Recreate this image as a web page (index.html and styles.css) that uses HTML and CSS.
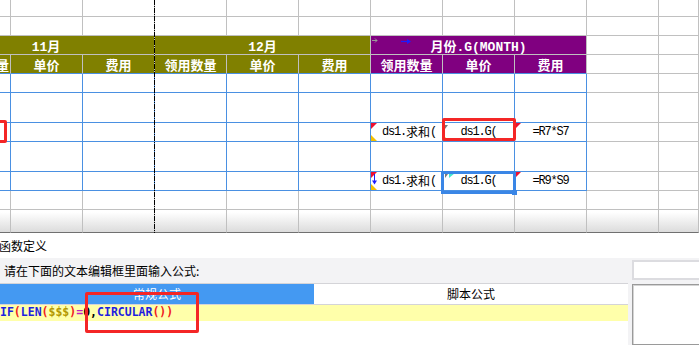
FILE: index.html
```html
<!DOCTYPE html>
<html lang="zh-CN">
<head>
    <meta charset="UTF-8">
    <title>报表设计 - 函数定义</title>
    <link rel="stylesheet" href="styles.css">
</head>
<body>

    <!-- spreadsheet area -->
    <div class="sheet">
        <div class="grid">
            <!-- row: empty -->
            <div class="c"></div><div class="c"></div><div class="c"></div><div class="c"></div><div class="c"></div><div class="c"></div><div class="c"></div><div class="c"></div><div class="c"></div><div class="c"></div><div class="c"></div>
            <!-- row: empty -->
            <div class="c"></div><div class="c"></div><div class="c"></div><div class="c"></div><div class="c"></div><div class="c"></div><div class="c"></div><div class="c"></div><div class="c"></div><div class="c"></div><div class="c"></div>

            <!-- header row 1 -->
            <div class="c olive hd span3 first-hd">11月</div>
            <div class="c olive hd span3">12月</div>
            <div class="c purple hd span3">
                <svg class="hd-arrows" width="44" height="8" viewBox="0 0 44 8">
                    <path d="M1 3.5H6M4 1.5L6 3.5L4 5.5" stroke="#9a9a9a" stroke-width="1" fill="none"/>
                    <path d="M30 4.5H39" stroke="#1c1cff" stroke-width="1.2"/>
                    <path d="M36 2L40 4.5L36 7Z" fill="#1c1cff"/>
                </svg>
                月份.G(MONTH)
            </div>
            <div class="c"></div><div class="c"></div>

            <!-- header row 2 -->
            <div class="c olive hd hb clip-right">领用数量</div>
            <div class="c olive hd hb">单价</div>
            <div class="c olive hd hb">费用</div>
            <div class="c olive hd hb">领用数量</div>
            <div class="c olive hd hb">单价</div>
            <div class="c olive hd hb">费用</div>
            <div class="c purple hd hb">领用数量</div>
            <div class="c purple hd hb">单价</div>
            <div class="c purple hd hb">费用</div>
            <div class="c"></div><div class="c"></div>

            <!-- data rows -->
            <div class="c b"></div><div class="c b"></div><div class="c b"></div><div class="c b"></div><div class="c b"></div><div class="c b"></div><div class="c b"></div><div class="c b"></div><div class="c b"></div><div class="c"></div><div class="c"></div>
            <div class="c b"></div><div class="c b"></div><div class="c b"></div><div class="c b"></div><div class="c b"></div><div class="c b"></div><div class="c b"></div><div class="c b"></div><div class="c b"></div><div class="c"></div><div class="c"></div>

            <div class="c b"></div><div class="c b"></div><div class="c b"></div><div class="c b"></div><div class="c b"></div><div class="c b"></div>
            <div class="c b txt txt-left"><i class="tri tri-red"></i><i class="tri tri-yellow"></i>ds1.<span class="cjk">求和</span>(</div>
            <div class="c b txt"><i class="tri tri-gray"></i><i class="tri tri-yellow"></i>ds1.G(</div>
            <div class="c b txt"><i class="tri tri-red"></i>=R7*S7</div>
            <div class="c"></div><div class="c"></div>

            <div class="c b"></div><div class="c b"></div><div class="c b"></div><div class="c b"></div><div class="c b"></div><div class="c b"></div><div class="c b"></div><div class="c b"></div><div class="c b"></div><div class="c"></div><div class="c"></div>

            <div class="c b"></div><div class="c b"></div><div class="c b"></div><div class="c b"></div><div class="c b"></div><div class="c b"></div>
            <div class="c b txt txt-left">
                <i class="tri tri-red"></i><i class="tri tri-yellow"></i>
                <svg class="down-arrow" width="5" height="11" viewBox="0 0 5 11">
                    <path d="M2.5 0V9" stroke="#1c1cff" stroke-width="1"/>
                    <path d="M0 6.5L2.5 10.5L5 6.5Z" fill="#1c1cff"/>
                </svg>
                ds1.<span class="cjk">求和</span>(
            </div>
            <div class="c b txt"><i class="tri tri-gray"></i><i class="tri tri-cyan"></i>ds1.G(</div>
            <div class="c b txt"><i class="tri tri-red"></i>=R9*S9</div>
            <div class="c"></div><div class="c"></div>

            <!-- rows below the data -->
            <div class="c"></div><div class="c"></div><div class="c"></div><div class="c"></div><div class="c"></div><div class="c"></div><div class="c"></div><div class="c"></div><div class="c"></div><div class="c"></div><div class="c"></div>
            <div class="c last"></div><div class="c last"></div><div class="c last"></div><div class="c last"></div><div class="c last"></div><div class="c last"></div><div class="c last"></div><div class="c last"></div><div class="c last"></div><div class="c last"></div><div class="c last"></div>
        </div>

        <!-- page break line -->
        <div class="page-break"></div>

        <!-- highlight boxes drawn over the sheet -->
        <div class="mark mark-left"></div>
        <div class="mark mark-cell"></div>
        <div class="select-box"><span class="handle"></span></div>
    </div>

    <!-- function definition panel -->
    <div class="panel">
        <div class="panel-title">函数定义</div>
        <div class="panel-body">
            <div class="prompt">请在下面的文本编辑框里面输入公式:</div>
            <div class="side-input"></div>
            <div class="editor">
                <div class="tabs">
                    <div class="tab active">常规公式</div>
                    <div class="tab">脚本公式</div>
                </div>
                <div class="formula"><span class="fn">IF</span><span class="par">(</span><span class="fn">LEN</span><span class="par">(</span><span class="var">$$$</span><span class="par">)</span><span class="op">=</span>0,<span class="fn">CIRCULAR</span><span class="par">())</span></div>
            </div>
            <div class="side-box"></div>
        </div>
        <div class="mark mark-formula"></div>
    </div>

</body>
</html>
```

FILE: styles.css
```css
/* page size matches the screenshot */
body {
    margin: 0;
    width: 699px;
    height: 345px;
    overflow: hidden;
    background-color: #fff;
    font-family: "Noto Sans CJK SC", "Liberation Sans", sans-serif;
    color: #000;
}

/* spreadsheet */
.sheet {
    position: relative;
    height: 233px;
    overflow: hidden;
}

.grid {
    display: grid;
    grid-template-columns: 11px repeat(9, 72px) 40px;
    grid-template-rows: 17px 19px 19px 19px 19px 30px 19px 30px 19px 19px 23px;
}

/* a single cell */
.c {
    box-sizing: border-box;
    position: relative;
    display: flex;
    align-items: center;
    justify-content: center;
    overflow: hidden;
    white-space: nowrap;
    border-right: 1px solid #c0c0c0;
    border-bottom: 1px solid #c0c0c0;
}

.c.b {
    border-color: #4a90e2; /* blue grid of the data block */
}

.c.hb {
    border-bottom-color: #4a90e2;
}

.olive {
    background-color: #808000;
}

.purple {
    background-color: #800080;
}

.hd {
    color: #fff;
    font: bold 13px "Liberation Mono", "Noto Sans CJK SC", monospace;
}

.span3 {
    grid-column: span 3;
}

/* merged header that starts left of the visible area */
.first-hd {
    padding-right: 62px;
}

.clip-right {
    justify-content: flex-end;
    padding-right: 1px;
}

.hd-arrows {
    position: absolute;
    left: 0;
    top: 1px;
}

.last {
    background: linear-gradient(#fff 10%, #dcdcdc);
    border-bottom-color: #707070;
}

/* cell text */
.txt {
    font: 12px "Liberation Mono", "Noto Sans CJK SC", monospace;
    letter-spacing: -1.2px;
}

.txt .cjk {
    letter-spacing: 0;
}

.txt-left {
    justify-content: flex-start;
    padding-left: 11px;
}

/* little cell markers */
.tri {
    position: absolute;
    width: 0;
    height: 0;
}

.tri-red {
    top: 0;
    left: 0;
    border-top: 6px solid #ee1030;
    border-right: 6px solid transparent;
}

.tri-yellow {
    bottom: 0;
    left: 0;
    border-bottom: 6px solid #f5c000;
    border-right: 6px solid transparent;
}

.tri-gray {
    top: 2px;
    left: 2px;
    border-top: 4px solid #7a7a7a;
    border-right: 3px solid transparent;
}

.tri-cyan {
    top: 1px;
    left: 6px;
    border-top: 5px solid #40e8d0;
    border-right: 6px solid transparent;
}

.down-arrow {
    position: absolute;
    left: 1px;
    top: 2px;
}

/* dash-dot page break */
.page-break {
    position: absolute;
    left: 154px;
    top: 0;
    width: 1px;
    height: 233px;
    background: repeating-linear-gradient(#000 0 5px, transparent 5px 6px, #000 6px 7px, transparent 7px 8px);
}

/* red annotation boxes */
.mark {
    position: absolute;
    box-sizing: border-box;
    border: 3px solid #f42626;
    border-radius: 2px;
}

.mark-left {
    left: -60px;
    top: 120px;
    width: 67px;
    height: 23px;
}

.mark-cell {
    left: 442px;
    top: 118px;
    width: 74px;
    height: 23px;
}

.mark-formula {
    left: 85px;
    top: 59px;
    width: 114px;
    height: 41px;
}

/* selected cell */
.select-box {
    position: absolute;
    box-sizing: border-box;
    left: 441px;
    top: 171px;
    width: 75px;
    height: 23px;
    border: 3px solid #3a86e6;
}

.handle {
    position: absolute;
    right: -4px;
    bottom: -4px;
    width: 5px;
    height: 5px;
    background-color: #3a86e6;
}

/* function panel */
.panel {
    position: relative;
    height: 112px;
}

.panel-title {
    height: 25px;
    line-height: 25px;
    font-size: 12px;
    margin-left: -1px;
}

.panel-body {
    display: grid;
    grid-template-columns: 628px 67px;
    grid-template-rows: 25px 62px;
    column-gap: 4px;
    background-color: #f3f3f5;
}

.prompt {
    font-size: 12px;
    line-height: 25px;
    padding-left: 4px;
}

.side-input {
    box-sizing: border-box;
    margin-top: 2px;
    height: 20px;
    width: 75px;
    background-color: #fff;
    border: 2px solid #dcdce0;
}

.editor {
    background-color: #fff;
    border-top: 1px solid #d4d4d8;
}

.tabs {
    display: flex;
    height: 20px;
    border-bottom: 1px solid #d4d4d8;
}

.tab {
    flex: 1;
    font-size: 12px;
    line-height: 20px;
    text-align: center;
}

.tab.active {
    background-color: #4499f2;
    color: #fff;
}

.formula {
    height: 16px;
    line-height: 16px;
    background-color: #ffffaa;
    font: bold 11.5px "DejaVu Sans Mono", monospace;
}

.fn {
    color: #1e1ee0;
}

.par {
    color: #f02020;
}

.var {
    color: #b49800;
}

.op {
    color: #c020c0;
}

.side-box {
    box-sizing: border-box;
    margin-top: 1px;
    width: 75px;
    background-color: #fff;
    border: 1px solid #9a9a9a;
    box-shadow: inset 1px 1px 0 #d4d4d4;
}
```
